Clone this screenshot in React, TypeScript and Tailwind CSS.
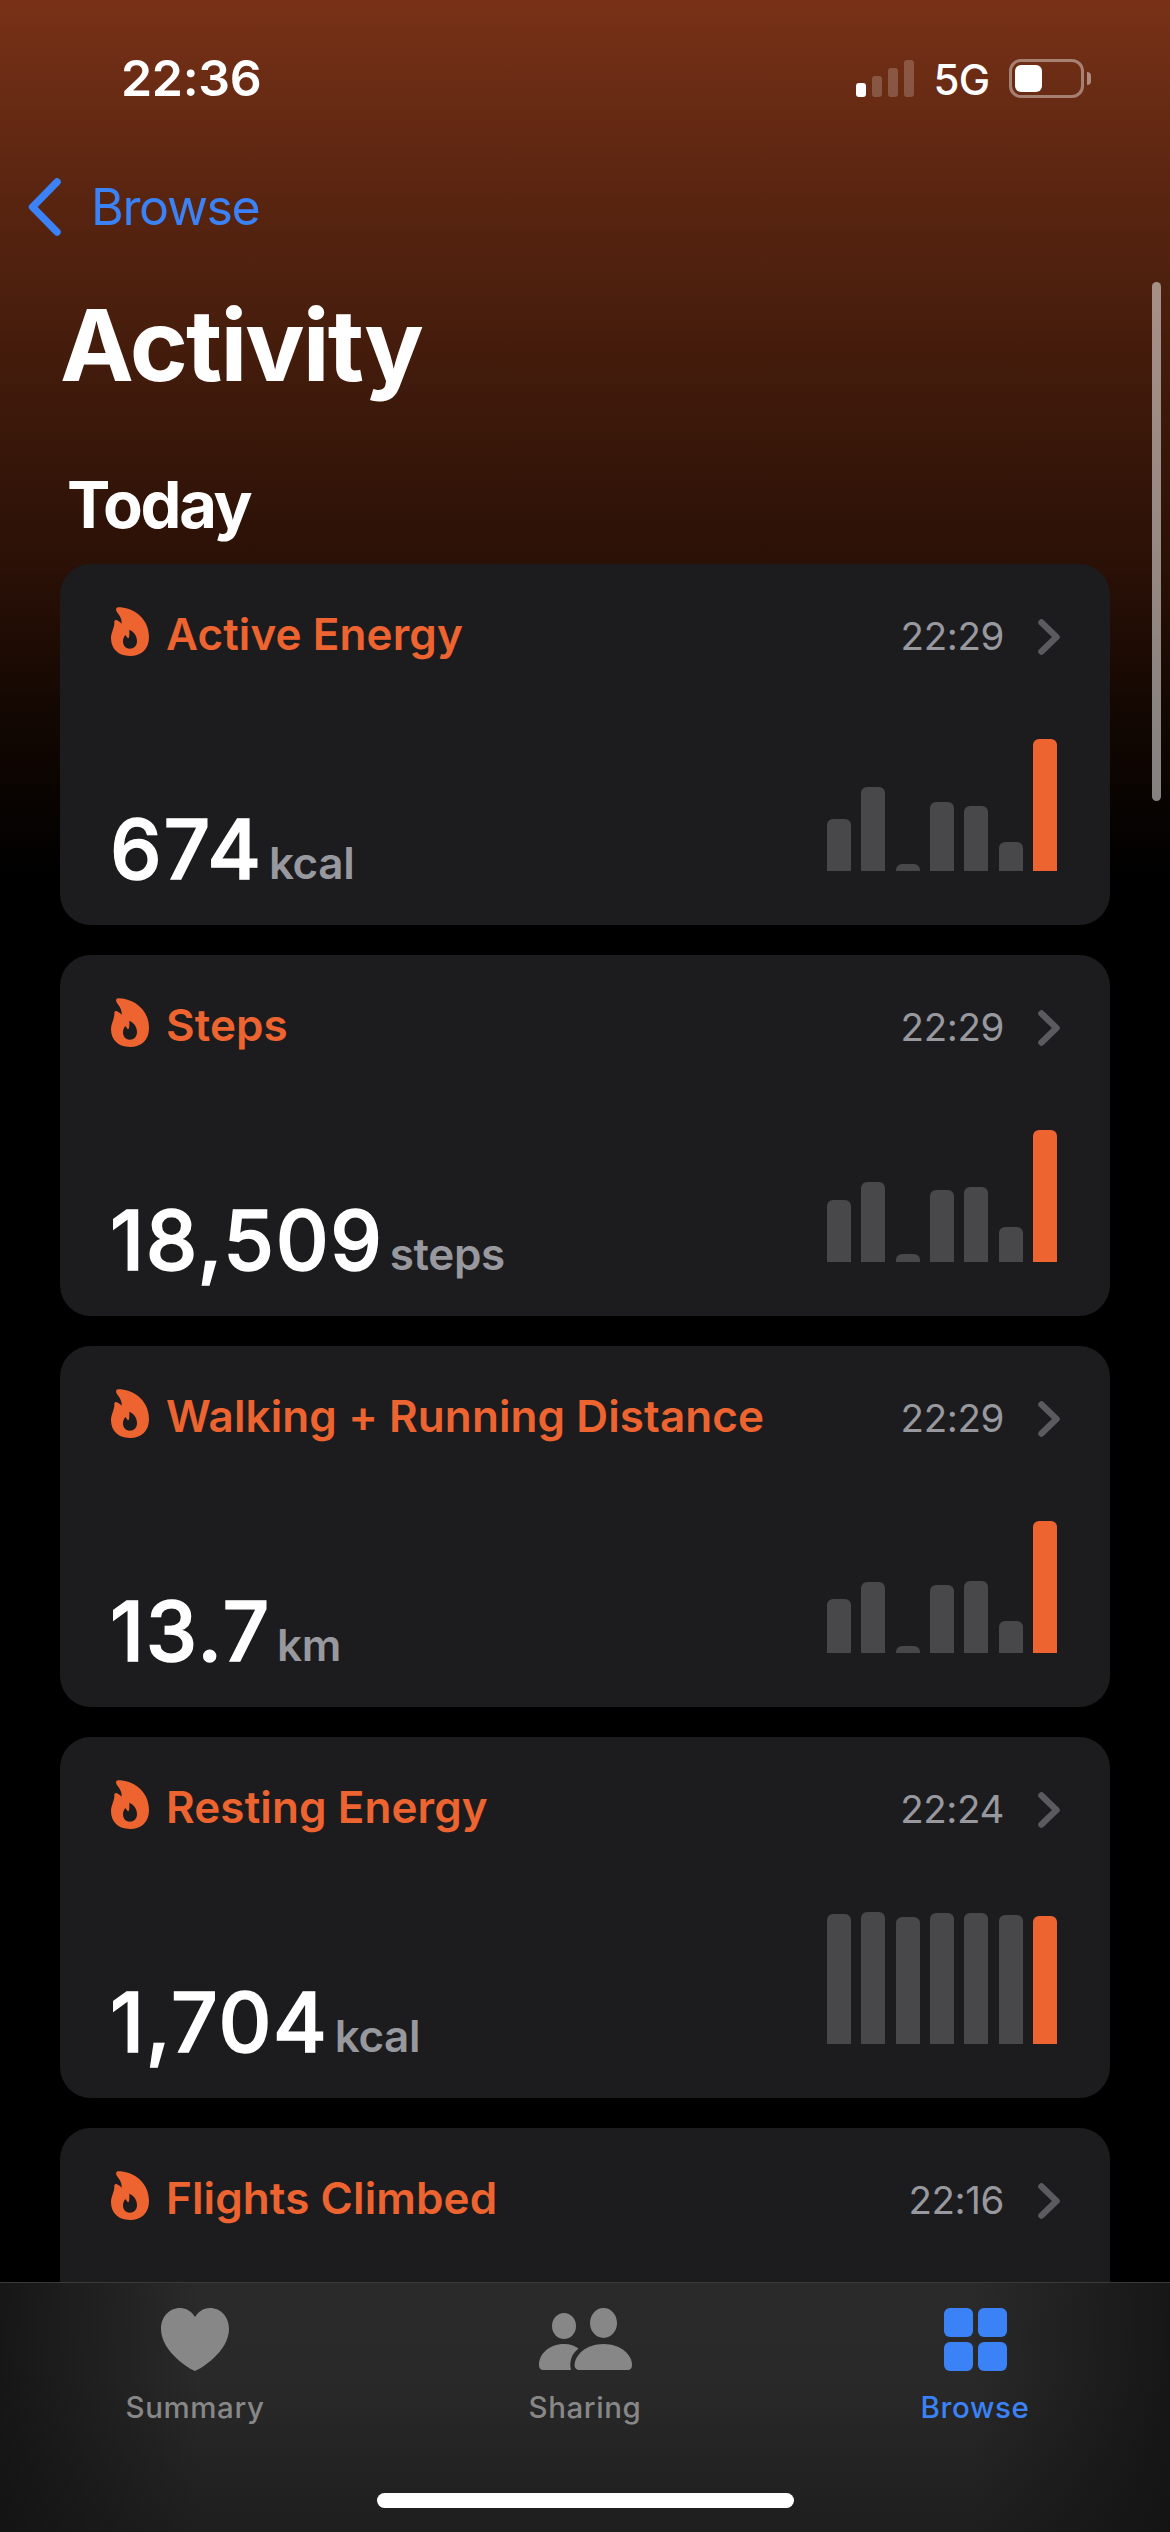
import React from 'react';

interface Metric {
  title: string;
  time: string;
  value?: string;
  unit?: string;
  bars?: number[];
}

const METRICS: Metric[] = [
  { title: 'Active Energy', time: '22:29', value: '674', unit: 'kcal', bars: [52, 84, 7, 69, 65, 29, 132] },
  { title: 'Steps', time: '22:29', value: '18,509', unit: 'steps', bars: [62, 80, 8, 72, 75, 35, 132] },
  { title: 'Walking + Running Distance', time: '22:29', value: '13.7', unit: 'km', bars: [54, 71, 7, 68, 72, 32, 132] },
  { title: 'Resting Energy', time: '22:24', value: '1,704', unit: 'kcal', bars: [130, 132, 127, 131, 131, 129, 128] },
  { title: 'Flights Climbed', time: '22:16' },
];

const FlameIcon = () => (
  <svg viewBox="0 0 114 147" className="w-[38px] h-[49px] mb-[5px] ml-[1px] shrink-0" fill="#ee6430">
    <path
      fillRule="evenodd"
      d="M22 1C62 1 114 30 114 90C114 128 90 147 57 147C22 147 0 126 0 94C0 76 11 62 10 46C10 36 18 36 32 50C34 31 20 20 16 11C14 5 16 1 22 1ZM55 68C66 72 78 85 78 102C78 117 69 125 56 125C44 125 36 116 36 103C36 94 40 87 43 85C46 84 47 93 52 94C56 90 55 78 55 68Z"
    />
  </svg>
);

const HeartIcon = () => (
  <svg viewBox="0 0 68 63" className="w-[68px] h-[63px]" fill="currentColor">
    <path d="M34 63C30 62 0 44 0 21C0 9 8 0 19 0C26 0 31 4 34 9C37 4 42 0 49 0C60 0 68 9 68 21C68 44 38 62 34 63Z" />
  </svg>
);

const PeopleIcon = () => (
  <svg viewBox="0 0 93 63" className="w-[93px] h-[63px]" fill="currentColor">
    <ellipse cx="25" cy="18" rx="12" ry="13" />
    <ellipse cx="64.5" cy="15" rx="13.5" ry="15" />
    <path d="M5 62C1.500 62 0 60 0 57C0 46 10 36 25 36C31 36 36 38 39.500 40.500C32.500 46 30 54 32 62Z" />
    <path d="M41 62C37.500 62 35.500 60.500 35.500 57C36 47 47 36 64.500 36C82 36 93 47 93 57C93 60.500 91.500 62 88 62Z" />
  </svg>
);

const GridIcon = () => (
  <div className="grid grid-cols-2 gap-[5px] w-[63px] h-[63px]">
    {[0, 1, 2, 3].map((i) => (
      <div key={i} className="bg-current rounded-[6px]" />
    ))}
  </div>
);

const StatusBar = () => (
  <div className="h-[156px] shrink-0 flex items-center justify-between pl-[121px] pr-[79px]">
    <span className="text-[50px] font-semibold tracking-[-0.3px]">22:36</span>
    <div className="flex items-center">
      <div className="flex items-end gap-[6px] h-[37px]">
        <div className="w-[10px] h-[14px] rounded-[3px] bg-white" />
        <div className="w-[10px] h-[21px] rounded-[3px] bg-white/20" />
        <div className="w-[10px] h-[29px] rounded-[3px] bg-white/20" />
        <div className="w-[10px] h-[37px] rounded-[3px] bg-white/20" />
      </div>
      <span className="w-[95px] pt-[2px] text-center text-[42px] font-medium tracking-[-0.8px]">5G</span>
      <div className="w-[75px] h-[39px] border-3 border-white/40 rounded-[12px] p-[3px]">
        <div className="w-[27px] h-[27px] bg-white rounded-[6px]" />
      </div>
      <div className="w-[4px] h-[13px] ml-[3px] bg-white/45 rounded-r-full" />
    </div>
  </div>
);

const MetricCard: React.FC<{ metric: Metric }> = ({ metric }) => (
  <div className="h-[361px] shrink-0 bg-[#1c1c1e] rounded-[31px] pt-[46px] pb-[33px] pl-[50px] pr-[49px] flex flex-col justify-between">
    <div className="h-[48px] flex items-center">
      <FlameIcon />
      <span className="ml-[17px] text-[44px] font-semibold text-[#ee6430] tracking-[0.1px]">{metric.title}</span>
      <span className="ml-auto mt-[5px] text-[38.5px] tracking-[-0.4px] text-[#98989f]">{metric.time}</span>
      <svg viewBox="0 0 24 38" className="w-[24px] h-[38px] ml-[33px] mt-[6px]" fill="none" stroke="#5a5a5f" strokeWidth="6.500" strokeLinecap="round" strokeLinejoin="round">
        <path d="M4.500 4.500L19.500 19L4.500 33.500" />
      </svg>
    </div>

    {metric.bars && (
      <div className="flex items-end justify-between">
        <div className="flex items-baseline gap-[6px]">
          {/* Thin outline softens the corners of the numerals */}
          <span className="text-[82px] leading-[84px] font-medium tracking-[1.8px] [-webkit-text-stroke:1.5px_white] [stroke-linejoin:round]">
            {metric.value}
          </span>
          <span className="text-[44px] leading-[48px] font-semibold tracking-[-0.4px] text-[#98989f]">{metric.unit}</span>
        </div>
        <div className="flex items-end gap-[10.33px] mb-[21px] mr-[4px]">
          {metric.bars.map((height, index) => (
            <div
              key={index}
              className={`w-[24px] rounded-t-[6px] ${index === 6 ? 'bg-[#ee6430]' : 'bg-[#48484a]'}`}
              style={{ height }}
            />
          ))}
        </div>
      </div>
    )}
  </div>
);

const TABS = [
  { label: 'Summary', icon: <HeartIcon />, active: false },
  { label: 'Sharing', icon: <PeopleIcon />, active: false },
  { label: 'Browse', icon: <GridIcon />, active: true },
];

const TabBar = () => (
  <div className="h-[250px] shrink-0 border-t border-[#3a3a3b] bg-[linear-gradient(to_right,rgba(16,16,16,0.75),transparent_17%,transparent_83%,rgba(16,16,16,0.75)),linear-gradient(#2a2a2a,#292929_40%,#1e1e1e)] flex flex-col justify-between">
    <div className="grid grid-cols-3 pt-[25px]">
      {TABS.map((tab) => (
        <div key={tab.label} className={`flex flex-col items-center gap-[18px] ${tab.active ? 'text-[#3b82f7]' : 'text-[#878787]'}`}>
          {tab.icon}
          <span className="text-[29.5px] leading-[36px] font-medium tracking-[0.6px]">{tab.label}</span>
        </div>
      ))}
    </div>
    <div className="w-[417px] h-[15px] mb-[24px] mx-auto rounded-full bg-white" />
  </div>
);

export default function App() {
  return (
    <div className="relative w-[1170px] h-[2532px] overflow-hidden flex flex-col bg-black bg-[linear-gradient(#783117_0px,#572410_210px,#3b180a_420px,#2a1006_570px,#120702_720px,#000000_880px)] font-['Inter','Liberation_Sans',sans-serif] text-white">
      <StatusBar />

      <div className="h-[102px] shrink-0 flex items-center pl-[28px] text-[#3b82f7]">
        <svg viewBox="0 0 33 58" className="w-[33px] h-[58px]" fill="none" stroke="currentColor" strokeWidth="7.500" strokeLinecap="round" strokeLinejoin="round">
          <path d="M29 4L4.500 29L29 54" />
        </svg>
        <span className="ml-[30px] text-[50px] tracking-[-1.3px]">Browse</span>
      </div>

      <div className="flex-1 min-h-0 overflow-hidden px-[60px] flex flex-col">
        <h1 className="mt-[27px] text-[99px] leading-[120px] font-bold tracking-[-1.9px]">Activity</h1>
        <h2 className="mt-[60px] mb-[19px] ml-[7px] text-[65px] leading-[80px] font-bold tracking-[-2.3px]">Today</h2>
        <div className="flex flex-col gap-[30px]">
          {METRICS.map((metric) => (
            <MetricCard key={metric.title} metric={metric} />
          ))}
        </div>
      </div>

      <TabBar />

      {/* Scroll indicator */}
      <div className="absolute right-[9px] top-[282px] w-[9px] h-[519px] rounded-full bg-white/50" />
    </div>
  );
}
